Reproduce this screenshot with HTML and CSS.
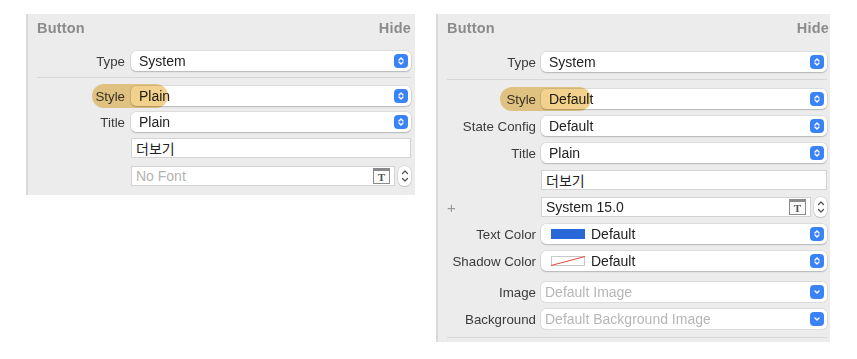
FILE: index.html
```html
<!DOCTYPE html>
<html lang="ko">
<head>
    <meta charset="UTF-8">
    <title>Button Inspector</title>
    <link rel="stylesheet" href="styles.css">
</head>
<body>
<main class="page">

    <!-- left: plain style -->
    <section class="panel panel-small">
        <header class="panel-head">
            <span>Button</span>
            <span>Hide</span>
        </header>
        <div class="rows">
            <div class="row">
                <label>Type</label>
                <div class="popup"><span>System</span><i class="arrows"><svg width="8" height="10" viewBox="0 0 8 10"><path d="M2 4 4 2 6 4M2 6 4 8 6 6"/></svg></i></div>
            </div>
            <hr class="sep">
            <div class="row">
                <label>Style</label>
                <div class="popup"><span>Plain</span><i class="arrows"><svg width="8" height="10" viewBox="0 0 8 10"><path d="M2 4 4 2 6 4M2 6 4 8 6 6"/></svg></i></div>
                <span class="mark mark-left"></span>
            </div>
            <div class="row">
                <label>Title</label>
                <div class="popup"><span>Plain</span><i class="arrows"><svg width="8" height="10" viewBox="0 0 8 10"><path d="M2 4 4 2 6 4M2 6 4 8 6 6"/></svg></i></div>
            </div>
            <div class="row">
                <label></label>
                <div class="field">더보기</div>
            </div>
            <div class="row row-font">
                <label></label>
                <div class="font-line">
                    <div class="field placeholder">No Font<span class="t-icon">T</span></div>
                    <div class="stepper"><svg width="8" height="16" viewBox="0 0 8 16"><path d="M1.5 5.5 4 3 6.5 5.5M1.5 10.5 4 13 6.5 10.5"/></svg></div>
                </div>
            </div>
        </div>
    </section>

    <!-- right: default style -->
    <section class="panel panel-large">
        <header class="panel-head">
            <span>Button</span>
            <span>Hide</span>
        </header>
        <div class="rows">
            <div class="row">
                <label>Type</label>
                <div class="popup"><span>System</span><i class="arrows"><svg width="8" height="10" viewBox="0 0 8 10"><path d="M2 4 4 2 6 4M2 6 4 8 6 6"/></svg></i></div>
            </div>
            <hr class="sep">
            <div class="row">
                <label>Style</label>
                <div class="popup"><span>Default</span><i class="arrows"><svg width="8" height="10" viewBox="0 0 8 10"><path d="M2 4 4 2 6 4M2 6 4 8 6 6"/></svg></i></div>
                <span class="mark mark-right"></span>
            </div>
            <div class="row">
                <label>State Config</label>
                <div class="popup"><span>Default</span><i class="arrows"><svg width="8" height="10" viewBox="0 0 8 10"><path d="M2 4 4 2 6 4M2 6 4 8 6 6"/></svg></i></div>
            </div>
            <div class="row">
                <label>Title</label>
                <div class="popup"><span>Plain</span><i class="arrows"><svg width="8" height="10" viewBox="0 0 8 10"><path d="M2 4 4 2 6 4M2 6 4 8 6 6"/></svg></i></div>
            </div>
            <div class="row">
                <label></label>
                <div class="field">더보기</div>
            </div>
            <div class="row">
                <label class="plus">+</label>
                <div class="font-line">
                    <div class="field">System 15.0<span class="t-icon">T</span></div>
                    <div class="stepper"><svg width="8" height="16" viewBox="0 0 8 16"><path d="M1.5 5.5 4 3 6.5 5.5M1.5 10.5 4 13 6.5 10.5"/></svg></div>
                </div>
            </div>
            <div class="row">
                <label>Text Color</label>
                <div class="popup"><span class="swatch swatch-blue"></span><span>Default</span><i class="arrows"><svg width="8" height="10" viewBox="0 0 8 10"><path d="M2 4 4 2 6 4M2 6 4 8 6 6"/></svg></i></div>
            </div>
            <div class="row">
                <label>Shadow Color</label>
                <div class="popup"><span class="swatch swatch-none"><svg width="34" height="10" viewBox="0 0 34 10"><path d="M0 9.5 34 0.5"/></svg></span><span>Default</span><i class="arrows"><svg width="8" height="10" viewBox="0 0 8 10"><path d="M2 4 4 2 6 4M2 6 4 8 6 6"/></svg></i></div>
            </div>
            <div class="row row-spaced">
                <label>Image</label>
                <div class="combo"><span>Default Image</span><i class="arrows"><svg width="8" height="10" viewBox="0 0 8 10"><path d="M2 4 4 6 6 4"/></svg></i></div>
            </div>
            <div class="row">
                <label>Background</label>
                <div class="combo"><span>Default Background Image</span><i class="arrows"><svg width="8" height="10" viewBox="0 0 8 10"><path d="M2 4 4 6 6 4"/></svg></i></div>
            </div>
            <hr class="sep sep-bottom">
        </div>
    </section>

</main>
</body>
</html>
```

FILE: styles.css
```css
body {
    margin: 0;
    padding: 0;
    background: #fff;
    font-family: "Liberation Sans", Arial, sans-serif;
    font-size: 13px;
    color: #262626;
}

.page {
    display: flex;
    align-items: flex-start;
    gap: 21px;
    padding: 14px 0 0 26px;
}

.panel {
    background: #ececec;
    border-left: 2px solid #dadada;
    box-sizing: border-box;
}

.panel-small {
    width: 389px;
    height: 181px;
}

.panel-large {
    width: 394px;
    height: 328px;
}

.panel-head {
    display: flex;
    justify-content: space-between;
    height: 28px;
    align-items: center;
    padding: 0 4px 0 9px;
    font-size: 14.5px;
    font-weight: bold;
    color: #8b8b8b;
    letter-spacing: 0.2px;
}

.panel-large .panel-head {
    padding-right: 1px;
}

.rows {
    display: flex;
    flex-direction: column;
    gap: 6px;
    padding: 9px 4px 0 0;
}

.panel-large .rows {
    gap: 7px;
    padding: 10px 3px 0 0;
}

.row {
    position: relative;
    display: grid;
    grid-template-columns: 97px 1fr;
    column-gap: 6px;
    align-items: center;
    height: 20px;
}

.panel-large .row {
    grid-template-columns: 98px 1fr;
    column-gap: 5px;
}

.row-spaced {
    margin-top: 4px;
}

.row-font {
    margin-top: 2px;
}

.row label {
    text-align: right;
    color: #3b3b3b;
    font-size: 13.3px;
    white-space: nowrap;
}

.row label.plus {
    text-align: left;
    padding-left: 9px;
    color: #9a9a9a;
    font-size: 15px;
}

.sep {
    border: 0;
    border-top: 1px solid #d6d6d6;
    margin: 0 0 2px 9px;
}

.sep-bottom {
    margin: 1px 0 0 9px;
}

.popup,
.combo {
    display: flex;
    align-items: center;
    height: 20px;
    background: #fff;
    border-radius: 5px;
    box-shadow: 0 0 0 0.5px rgba(0, 0, 0, 0.12), 0 1px 1.5px rgba(0, 0, 0, 0.18);
    padding-left: 8px;
    box-sizing: border-box;
    font-size: 14px;
    color: #222;
}

.popup span,
.combo span {
    flex: 1;
}

.combo {
    padding-left: 4px;
    box-shadow: 0 0 0 1px #dcdcdc;
}

.combo span {
    color: #b6b6b6;
}

.arrows {
    display: flex;
    align-items: center;
    justify-content: center;
    width: 14px;
    height: 14px;
    margin-right: 3px;
    background: #3a82f7;
    border-radius: 4px;
}

.arrows svg path {
    fill: none;
    stroke: #fff;
    stroke-width: 1.4;
    stroke-linecap: round;
    stroke-linejoin: round;
}

.popup .swatch {
    flex: none;
    width: 34px;
    height: 10px;
    margin: 0 6px 0 2px;
}

.swatch-blue {
    background: #2968d8;
}

.swatch-none {
    background: #fff;
    box-shadow: inset 0 0 0 1px #c8c8c8;
}

.swatch-none svg {
    display: block;
}

.swatch-none path {
    stroke: #e8453c;
    stroke-width: 1;
}

.field {
    display: flex;
    align-items: center;
    height: 20px;
    box-sizing: border-box;
    background: #fff;
    border: 1px solid #d3d3d3;
    padding-left: 4px;
    font-family: "Liberation Sans", "Noto Sans CJK KR", sans-serif;
    font-size: 14px;
    color: #222;
}

.field.placeholder {
    color: #b3b3b3;
}

.font-line {
    display: flex;
    align-items: center;
    gap: 3px;
}

.font-line .field {
    flex: 1;
    justify-content: space-between;
}

.t-icon {
    width: 15px;
    height: 12px;
    margin-right: 4px;
    border: 1px solid #8a8a8a;
    border-top-width: 3px;
    font-family: "Liberation Serif", serif;
    font-weight: bold;
    font-size: 11px;
    line-height: 12px;
    text-align: center;
    color: #555;
    background: #fafafa;
}

.stepper {
    width: 13px;
    height: 20px;
    box-sizing: border-box;
    background: #fff;
    border-radius: 6px;
    box-shadow: 0 0 0 0.5px rgba(0, 0, 0, 0.15), 0 1px 1px rgba(0, 0, 0, 0.12);
    display: flex;
    align-items: center;
    justify-content: center;
}

.stepper path {
    fill: none;
    stroke: #555;
    stroke-width: 1.3;
    stroke-linecap: round;
    stroke-linejoin: round;
}

.mark {
    position: absolute;
    top: -2px;
    height: 24px;
    border-radius: 12px;
    background: rgba(232, 178, 62, 0.6);
    mix-blend-mode: multiply;
}

.mark-left {
    left: 64px;
    width: 76px;
}

.mark-right {
    left: 62px;
    width: 91px;
}
```
